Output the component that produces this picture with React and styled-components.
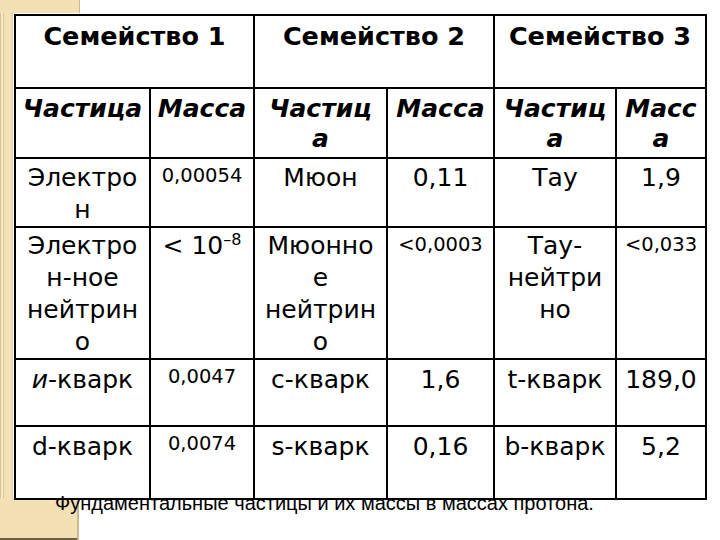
import React from "react";
import styled, { createGlobalStyle } from "styled-components";

const GlobalStyle = createGlobalStyle`
  body {
    margin: 0;
    background: #fff;
  }
`;

const beige = "#f3e0b5";

const Page = styled.div`
  width: 720px;
  height: 540px;
  box-sizing: border-box;
  padding: 14px 0 0 14px;
  overflow: hidden;
  font-family: "DejaVu Sans", Verdana, sans-serif;
  color: #000;
  background:
    linear-gradient(#cdb98b, #cdb98b) 79px 0 / 1px 13px no-repeat,
    linear-gradient(#cdb98b, #cdb98b) 77px 498px / 2px 42px no-repeat,
    linear-gradient(#6b6044, #6b6044) 0 538px / 79px 2px no-repeat,
    linear-gradient(${beige}, ${beige}) 0 0 / 80px 13px no-repeat,
    linear-gradient(${beige}, ${beige}) 0 498px / 79px 42px no-repeat,
    linear-gradient(
        to right,
        #d6c293 0 1px,
        #f7e9c8 1px 3px,
        #dcc89a 3px 4px,
        ${beige} 4px 12px,
        #e0cda0 12px
      )
      0 0 / 13px 100% no-repeat,
    #fff;
`;

const Table = styled.table`
  width: 691px;
  table-layout: fixed;
  border-collapse: collapse;
  background: #fff;
  border: 2px solid #000;
`;

const Row = styled.tr`
  height: ${(p) => p.$height}px;
`;

const Cell = styled.td`
  border: 2px solid #000;
  padding: ${(p) => (p.$small ? 5 : p.$pad)}px 2px 0;
  vertical-align: top;
  text-align: center;
  font-size: ${(p) => (p.$small ? "19.5px" : "25px")};
  line-height: ${(p) => (p.$small ? "24px" : "32px")};
  white-space: nowrap;
`;

const HeadCell = styled(Cell)`
  padding-top: 5px;
  font-weight: bold;
  font-style: italic;
  line-height: 30px;
`;

const FamilyCell = styled(Cell)`
  padding-top: 5px;
  font-weight: bold;
  font-size: 25.5px;
  line-height: 30px;
`;

const Sup = styled.sup`
  font-size: 16px;
  vertical-align: 9px;
  line-height: 0;
`;

const Caption = styled.div`
  margin-top: -7px;
  padding-left: 41px;
  font-family: "Liberation Sans", Arial, sans-serif;
  font-size: 20px;
  line-height: 20px;
  color: #000;
`;

const rows = [
  [
    { text: ["Электро", "н"] },
    { text: ["0,00054"], small: true },
    { text: ["Мюон"] },
    { text: ["0,11"] },
    { text: ["Тау"] },
    { text: ["1,9"] },
  ],
  [
    { text: ["Электро", "н-ное", "нейтрин", "о"] },
    { text: [<>{"< 10"}<Sup>–8</Sup></>] },
    { text: ["Мюонно", "е", "нейтрин", "о"] },
    { text: ["<0,0003"], small: true },
    { text: ["Тау-", "нейтри", "но"] },
    { text: ["<0,033"], small: true },
  ],
  [
    { text: [<><i>и</i>-кварк</>] },
    { text: ["0,0047"], small: true },
    { text: ["c-кварк"] },
    { text: ["1,6"] },
    { text: ["t-кварк"] },
    { text: ["189,0"] },
  ],
  [
    { text: ["d-кварк"] },
    { text: ["0,0074"], small: true },
    { text: ["s-кварк"] },
    { text: ["0,16"] },
    { text: ["b-кварк"] },
    { text: ["5,2"] },
  ],
];

const rowHeights = [69, 132, 67, 73];
const rowPads = [3, 2, 4, 4];
const colWidths = [135, 104, 133, 107, 122, 90];
const subHeads = [["Частица"], ["Масса"], ["Частиц", "а"], ["Масса"], ["Частиц", "а"], ["Масс", "а"]];

const Lines = ({ lines }) =>
  lines.map((line, i) => (
    <React.Fragment key={i}>
      {i > 0 && <br />}
      {line}
    </React.Fragment>
  ));

const App = () => {
  return (
    <Page>
      <GlobalStyle />
      <Table>
        <colgroup>
          {colWidths.map((w, i) => (
            <col key={i} style={{ width: w }} />
          ))}
        </colgroup>
        <tbody>
          <Row $height={73}>
            <FamilyCell colSpan={2}>Семейство 1</FamilyCell>
            <FamilyCell colSpan={2}>Семейство 2</FamilyCell>
            <FamilyCell colSpan={2}>Семейство 3</FamilyCell>
          </Row>
          <Row $height={70}>
            {subHeads.map((lines, i) => (
              <HeadCell key={i}>
                <Lines lines={lines} />
              </HeadCell>
            ))}
          </Row>
          {rows.map((row, r) => (
            <Row key={r} $height={rowHeights[r]}>
              {row.map((cell, c) => (
                <Cell key={c} $small={cell.small} $pad={rowPads[r]}>
                  <Lines lines={cell.text} />
                </Cell>
              ))}
            </Row>
          ))}
        </tbody>
      </Table>
      <Caption>Фундаментальные частицы и их массы в массах протона.</Caption>
    </Page>
  );
};

export default App;
